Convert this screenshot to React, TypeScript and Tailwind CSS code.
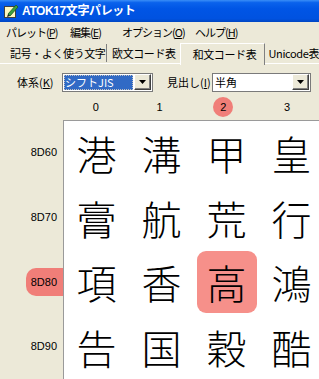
import React from "react";

const FONT = { fontFamily: '"Noto Sans CJK JP", "Noto Sans", sans-serif' };

function TitleIcon() {
  return (
    <svg width="16" height="16" viewBox="0 0 16 16">
      <rect x="1.5" y="3.5" width="11" height="11" fill="#fff8c0" stroke="#404040" />
      <path d="M5 11 L13 2 L15 4 L7 13 Z" fill="#3ca040" stroke="#1d5a1f" strokeWidth="0.8" />
      <path d="M5 11 L4 14 L7 13 Z" fill="#222" />
    </svg>
  );
}

function DropBtn() {
  return (
    <div className="w-[17px] h-[16px] shrink-0 bg-[#ece9d8] border border-t-white border-l-white border-r-[#404040] border-b-[#404040] flex items-center justify-center shadow-[inset_-1px_-1px_0_#808080]">
      <svg width="7" height="4" viewBox="0 0 7 4"><path d="M0 0 H7 L3.5 4 Z" fill="#000" /></svg>
    </div>
  );
}

const chars = [
  ["港", "溝", "甲", "皇"],
  ["膏", "航", "荒", "行"],
  ["項", "香", "高", "鴻"],
  ["告", "国", "穀", "酷"],
];
const labels = ["8D60", "8D70", "8D80", "8D90"];

export default function App() {
  return (
    <div className="w-[319px] h-[379px] overflow-hidden bg-[#ece9d8] flex flex-col whitespace-nowrap" style={FONT}>
      {/* title bar */}
      <div className="h-[22px] shrink-0 flex items-center pl-[3px] gap-[3px] bg-[linear-gradient(to_bottom,#3a8ef7_0%,#0a62ec_12%,#0055e5_40%,#0052e0_85%,#0046c2_100%)]">
        <TitleIcon />
        <span className="text-white font-bold text-[12px] leading-none tracking-[-0.4px]" style={{ fontFamily: '"Liberation Sans", "Noto Sans CJK JP", sans-serif' }}>
          ATOK17文字パレット
        </span>
      </div>
      {/* menu */}
      <div className="h-[20px] shrink-0 flex items-center text-[11px] leading-none text-black tracking-[-1px]">
        <span className="ml-[6px] w-[64px]">パレット(<u>P</u>)</span>
        <span className="w-[52px]">編集(<u>E</u>)</span>
        <span className="w-[73px]">オプション(<u>O</u>)</span>
        <span>ヘルプ(<u>H</u>)</span>
      </div>
      {/* tabs */}
      <div className="h-[22px] shrink-0 flex items-end text-[11px] leading-none relative tracking-[-0.4px]">
        <div className="absolute left-0 right-0 bottom-0 h-px bg-white" />
        <div className="ml-[8px] w-[100px] h-[18px] mb-[2px] flex items-center pl-[2px] border-r border-[#808080]">記号・よく使う文字</div>
        <div className="w-[74px] h-[18px] mb-[2px] flex items-center pl-[5px]">欧文コード表</div>
        <div className="w-[85px] h-[22px] flex items-center justify-center pl-[4px] border-t border-l border-white border-r border-r-[#808080] bg-[#ece9d8] relative z-10 -mb-px">和文コード表</div>
        <div className="h-[18px] mb-[2px] flex items-center pl-[4px]">Unicode表</div>
      </div>
      {/* controls */}
      <div className="h-[30px] shrink-0 flex items-center text-[11px] leading-none pt-[6px]">
        <span className="ml-[17px] w-[45px]">体系(<u>K</u>)</span>
        <div className="w-[91px] h-[19px] bg-white border border-[#7a7a7a] flex items-center p-px">
          <div className="flex-1 h-full bg-[#316ac5] text-white flex items-center pl-[1px] outline-1 outline-dotted outline-[#c0c0c0] -outline-offset-1 mr-px">シフトJIS</div>
          <DropBtn />
        </div>
        <span className="ml-[14px] w-[45px]">見出し(<u>I</u>)</span>
        <div className="w-[99px] h-[19px] bg-white border border-[#7a7a7a] flex items-center p-px">
          <div className="flex-1 h-full flex items-center pl-[1px]">半角</div>
          <DropBtn />
        </div>
      </div>
      {/* column headers */}
      <div className="h-[26px] shrink-0 flex items-center pl-[64px] text-[11px]" style={{ fontFamily: '"Liberation Sans", sans-serif' }}>
        {[0, 1, 2, 3].map((n) => (
          <div key={n} className="w-[65px] flex justify-center">
            {n === 2 ? (
              <div className="w-[20px] h-[20px] rounded-full bg-[#f07e78] flex items-center justify-center">{n}</div>
            ) : (
              <span>{n}</span>
            )}
          </div>
        ))}
      </div>
      {/* body */}
      <div className="flex-1 flex min-h-0">
        <div className="w-[63px] shrink-0 flex flex-col text-[11px]" style={{ fontFamily: '"Liberation Sans", sans-serif' }}>
          {labels.map((l, i) => (
            <div key={l} className="h-[65px] flex items-center justify-end">
              {i === 2 ? (
                <div className="w-[37px] h-[28px] rounded-l-[10px] bg-[#f07e78] flex items-center justify-end pr-[6px]">{l}</div>
              ) : (
                <span className="pr-[6px]">{l}</span>
              )}
            </div>
          ))}
        </div>
        <div className="flex-1 bg-white border-l border-t border-[#9a9a9a] flex flex-col">
          {chars.map((row, r) => (
            <div key={r} className="h-[65px] flex">
              {row.map((c, ci) => (
                <div key={ci} className="w-[65px] shrink-0 flex items-center justify-center">
                  {r === 2 && ci === 2 ? (
                    <div className="w-[60px] h-[62px] rounded-[9px] bg-[#f6908a] flex items-center justify-center text-[40px] leading-none font-light">{c}</div>
                  ) : (
                    <span className="text-[40px] leading-none font-light">{c}</span>
                  )}
                </div>
              ))}
            </div>
          ))}
        </div>
      </div>
    </div>
  );
}
